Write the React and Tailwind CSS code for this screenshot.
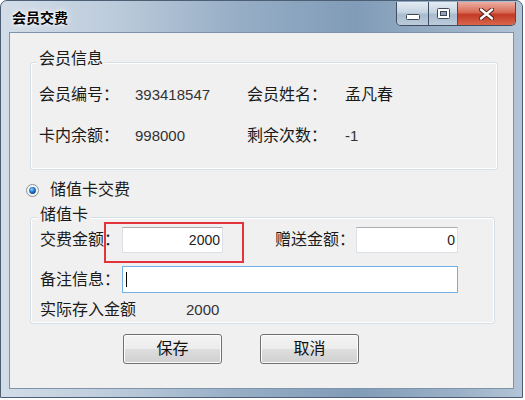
import React from 'react';

const CaptionButtons = () => (
  <div className="ml-auto mr-[6px] mt-[1px] flex h-[24px] rounded-b-[5px] border border-t-0 border-[#3e4d60] overflow-hidden">
    <div className="w-[31px] flex items-center justify-center bg-[linear-gradient(180deg,#e4ecf4_0%,#c5d3e1_45%,#a8bccf_55%,#bccbdb_100%)]">
      <svg width="14" height="6" viewBox="0 0 14 6" className="mt-[6px]">
        <rect x="0.5" y="0.5" width="13" height="5" rx="1" fill="#fff" stroke="#3b4656" />
      </svg>
    </div>
    <div className="w-[29px] flex items-center justify-center border-l border-[#3e4d60] bg-[linear-gradient(180deg,#e4ecf4_0%,#c5d3e1_45%,#a8bccf_55%,#bccbdb_100%)]">
      <svg width="13" height="11" viewBox="0 0 13 11">
        <rect x="0.5" y="0.5" width="12" height="10" rx="1" fill="#fff" stroke="#3b4656" />
        <rect x="3.5" y="3.5" width="6" height="4" fill="#8fa4ba" stroke="#3b4656" />
      </svg>
    </div>
    <div className="w-[58px] flex items-center justify-center border-l border-[#3e4d60] bg-[linear-gradient(180deg,#ecaea2_0%,#d86a55_45%,#c23a25_55%,#d9664b_100%)]">
      <svg width="15" height="12" viewBox="0 0 15 12">
        <path d="M2 1.5 L13 10.5 M13 1.5 L2 10.5" stroke="#4a1a12" strokeWidth="4.2" strokeLinecap="round" />
        <path d="M2 1.5 L13 10.5 M13 1.5 L2 10.5" stroke="#fff" strokeWidth="2.4" strokeLinecap="round" />
      </svg>
    </div>
  </div>
);

const Radio = () => (
  <svg width="13" height="13" viewBox="0 0 13 13">
    <defs>
      <radialGradient id="dot" cx="40%" cy="35%" r="70%">
        <stop offset="0%" stopColor="#8fd3ff" />
        <stop offset="55%" stopColor="#1f74c8" />
        <stop offset="100%" stopColor="#0b3f7a" />
      </radialGradient>
    </defs>
    <circle cx="6.5" cy="6.5" r="6" fill="#f4f4f4" stroke="#8c8f94" />
    <circle cx="6.5" cy="6.5" r="3.4" fill="url(#dot)" />
  </svg>
);

const TextBox = ({ className, children }) => (
  <div className={`flex items-center bg-white border border-[#dbdfe6] border-t-[#abadb3] ${className}`}>
    {children}
  </div>
);

const Button = ({ children }) => (
  <button className="w-[99px] h-[30px] rounded-[3px] border border-[#707070] shadow-[inset_0_0_0_1px_#fcfcfc] bg-[linear-gradient(180deg,#f4f4f4_0%,#ececec_50%,#dedede_50%,#d0d0d0_100%)] text-[16px] leading-[20px] text-[#111]">
    {children}
  </button>
);

export default function App() {
  return (
    <div className="w-[525px] h-[400px] bg-white [font-family:'Liberation_Sans','Noto_Sans_CJK_SC',sans-serif]">
      <div className="w-[523px] h-[398px] flex flex-col rounded-t-[7px] border border-[#4d5f74] bg-[linear-gradient(90deg,#d2dde8_0%,#bccbdb_22%,#97aec6_45%,#819cb8_68%,#9bb1c7_88%,#b3c5d6_100%)]">
        <div className="h-[31px] flex items-start">
          <span className="ml-[11px] mt-[8px] text-[14px] leading-[18px] font-bold text-black [text-shadow:0_0_6px_#fff,0_0_3px_#fff]">
            会员交费
          </span>
          <CaptionButtons />
        </div>

        <div className="flex-1 mx-[8px] mb-[8px] border border-[#7f94ab] bg-[#f0f0f0] flex flex-col text-[16px] text-[#1a1a1a]">
          {/* 会员信息 */}
          <div className="mt-[29px] ml-[20px] w-[468px] rounded-[3px] border border-[#d5dfe5] shadow-[inset_0_0_0_1px_#fff] pl-[8px] pb-[23px]">
            <div className="-mt-[14px] -ml-[2px] w-fit px-[2px] bg-[#f0f0f0] leading-[20px]">会员信息</div>
            <div className="mt-[16px] grid grid-cols-[96px_112px_98px_1fr] gap-y-[21px] leading-[20px]">
              <span>会员编号：</span>
              <span className="text-[15px] text-[#333]">393418547</span>
              <span>会员姓名：</span>
              <span>孟凡春</span>
              <span>卡内余额：</span>
              <span className="text-[15px] text-[#333]">998000</span>
              <span>剩余次数：</span>
              <span className="text-[15px] text-[#333]">-1</span>
            </div>
          </div>

          {/* radio */}
          <div className="mt-[10px] ml-[16px] h-[20px] flex items-center gap-[11px] leading-[20px]">
            <Radio />
            <span>储值卡交费</span>
          </div>

          {/* 储值卡 */}
          <div className="mt-[17px] ml-[20px] w-[465px] rounded-[3px] border border-[#d5dfe5] shadow-[inset_0_0_0_1px_#fff] pl-[9px] pb-[3px]">
            <div className="-mt-[13px] -ml-[2px] w-fit px-[2px] bg-[#f0f0f0] leading-[20px]">储值卡</div>

            <div className="relative mt-[2px] h-[26px] flex items-center">
              <span className="w-[82px] leading-[20px]">交费金额：</span>
              <TextBox className="w-[101px] h-[26px] justify-end pr-[2px]">
                <span className="text-[14px] text-[#222]">2000</span>
              </TextBox>
              <span className="ml-[52px] w-[81px] leading-[20px]">赠送金额：</span>
              <TextBox className="w-[102px] h-[26px] justify-end pr-[2px]">
                <span className="text-[14px] text-[#222]">0</span>
              </TextBox>
              <div className="absolute left-[64px] -top-[5px] w-[140px] h-[41px] border-2 border-[#e3343b]" />
            </div>

            <div className="mt-[13px] h-[27px] flex items-center">
              <span className="w-[82px] leading-[20px]">备注信息：</span>
              <div className="w-[336px] h-[27px] flex items-center bg-white border border-[#6fb0e6] pl-[3px]">
                <span className="w-[1px] h-[15px] bg-black" />
              </div>
            </div>

            <div className="mt-[7px] h-[20px] flex items-center leading-[20px]">
              <span className="w-[146px]">实际存入金额</span>
              <span className="text-[15px] text-[#333]">2000</span>
            </div>
          </div>

          <div className="mt-[10px] ml-[113px] flex gap-[38px]">
            <Button>保存</Button>
            <Button>取消</Button>
          </div>
        </div>
      </div>
    </div>
  );
}
